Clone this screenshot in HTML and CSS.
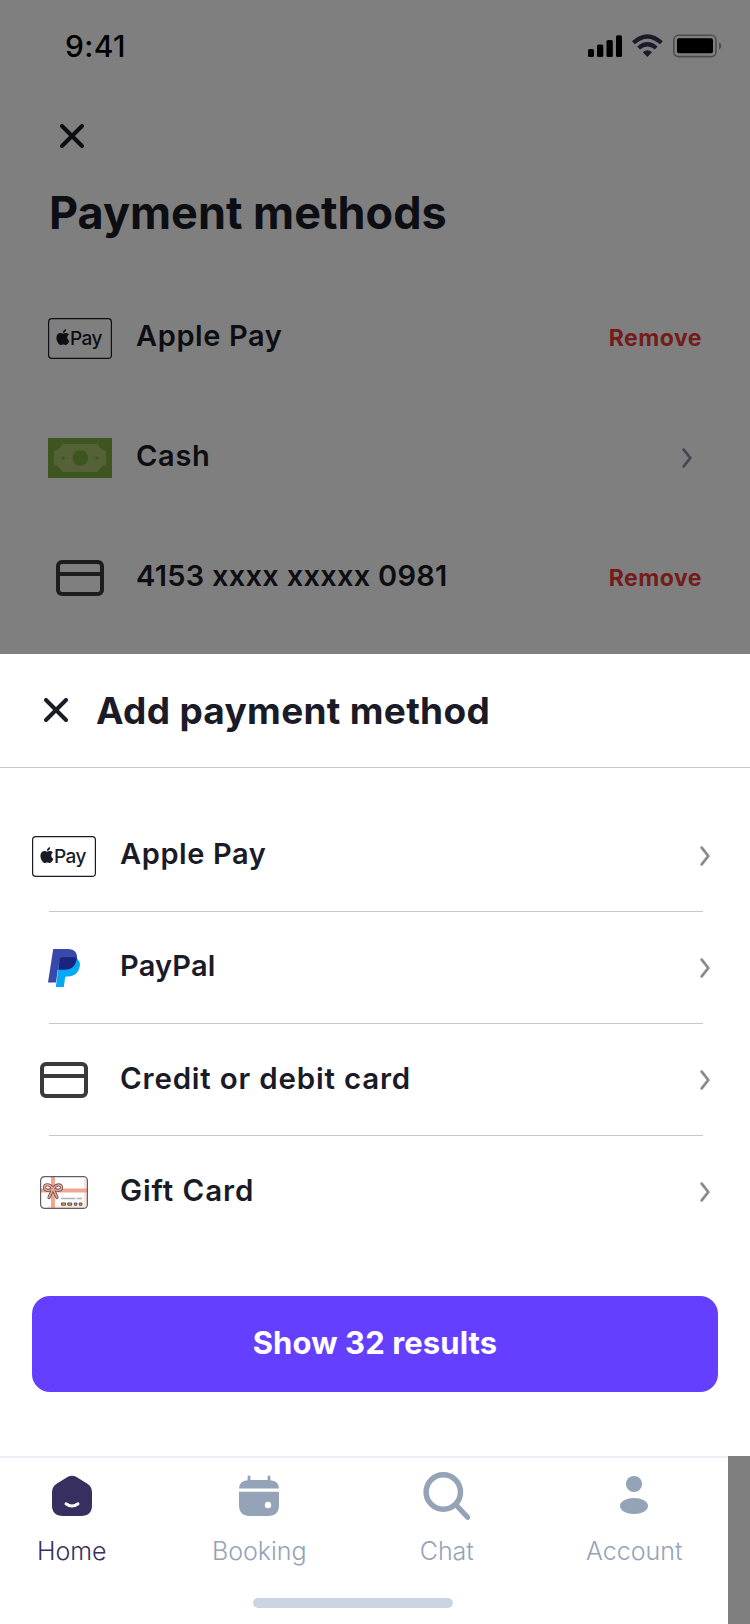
FILE: index.html
```html
<!DOCTYPE html>
<html lang="en">
<head>
<meta charset="utf-8">
<title>Payment methods</title>
<link rel="stylesheet" href="styles.css">
</head>
<body>
<svg class="defs" aria-hidden="true">
  <symbol id="close" viewBox="0 0 24 24"><path d="M2 2L22 22M22 2L2 22" fill="none" stroke="#1b1b28" stroke-width="4" stroke-linecap="round"/></symbol>
  <symbol id="chevron" viewBox="0 0 10 20"><path d="M1.7 1.7L8.3 10L1.7 18.3" fill="none" stroke="currentColor" stroke-width="2.8" stroke-linecap="round" stroke-linejoin="round"/></symbol>
  <symbol id="applepay" viewBox="0 0 64 41">
    <rect x=".6" y=".6" width="62.8" height="39.8" rx="3.2" fill="none" stroke="#1b1b28" stroke-width="1.2"/>
    <path transform="translate(7 11.2) scale(.66)" fill="#1b1b28" d="M12.152 6.896c-.948 0-2.415-1.078-3.96-1.04-2.04.027-3.91 1.183-4.961 3.014-2.117 3.675-.546 9.103 1.519 12.09 1.013 1.454 2.208 3.09 3.792 3.039 1.52-.065 2.09-.987 3.935-.987 1.831 0 2.35.987 3.96.948 1.637-.026 2.676-1.48 3.676-2.948 1.156-1.688 1.636-3.325 1.662-3.415-.039-.013-3.182-1.221-3.22-4.857-.026-3.04 2.48-4.494 2.597-4.559-1.429-2.09-3.623-2.324-4.39-2.376-2-.156-3.675 1.09-4.61 1.09zM15.53 3.83c.843-1.012 1.4-2.427 1.245-3.83-1.207.052-2.662.805-3.532 1.818-.78.896-1.454 2.338-1.273 3.714 1.338.104 2.715-.688 3.559-1.701"/>
    <text class="applepay-word" x="22" y="26.6">Pay</text>
  </symbol>
  <symbol id="card" viewBox="0 0 48 36"><rect x="2" y="2" width="44" height="32" rx="4" fill="none" stroke="#3a3a3a" stroke-width="4"/><path d="M3 14H45" stroke="#3a3a3a" stroke-width="4"/></symbol>
</svg>

<div class="phone">
  <main class="screen">
    <div class="status">
      <span class="time">9:41</span>
      <svg class="status-icons" viewBox="0 0 134 24">
        <rect x="0" y="15" width="6" height="8" rx="1.6"/><rect x="9" y="10.5" width="6.3" height="12.5" rx="1.6"/><rect x="18.5" y="6" width="6.3" height="17" rx="1.6"/><rect x="28" y="1.3" width="6" height="21.7" rx="1.6"/>
        <g fill="none" stroke="#3a3558" stroke-width="4.2"><path d="M45.4 8.8Q59.4-3.8 73.4 8.8"/><path d="M50.6 14Q59.4 6.4 68.2 14"/></g>
        <path d="M54.8 18.3Q59.4 14.3 64 18.3L59.4 23z" fill="#3a3558"/>
        <rect x="85.8" y="1.2" width="42.2" height="21.4" rx="4.6" fill="none" stroke="#000" stroke-opacity=".4" stroke-width="1.6"/>
        <rect x="89" y="4.3" width="36" height="15" rx="2"/>
        <path d="M131 8.6Q133.4 9.6 133.4 12T131 15.6z" fill-opacity=".4"/>
      </svg>
    </div>
    <svg class="close screen-close"><use href="#close"/></svg>
    <h1 class="title">Payment methods</h1>
    <ul class="saved">
      <li class="saved-row"><span class="slot"><svg class="ic-apple"><use href="#applepay"/></svg></span><span class="name n-apple">Apple Pay</span><span class="remove">Remove</span></li>
      <li class="saved-row"><span class="slot">
        <svg class="ic-cash" viewBox="0 0 64 40"><path fill="#7aaa3e" d="M0 0H64V40H0z"/><path fill="#abc470" d="M14 6H50Q52 11.5 58 13V27Q52 28.5 50 34H14Q12 28.5 6 27V13Q12 11.5 14 6z"/><circle cx="32.3" cy="20" r="7.8" fill="#7aaa3e"/><circle cx="15.5" cy="20" r="1.6" fill="#7aaa3e"/><circle cx="49" cy="20" r="1.6" fill="#7aaa3e"/></svg>
        </span><span class="name n-cash">Cash</span><svg class="chevron saved-chevron"><use href="#chevron"/></svg></li>
      <li class="saved-row"><span class="slot"><svg class="ic-card"><use href="#card"/></svg></span><span class="name n-number">4153 xxxx xxxxx 0981</span><span class="remove">Remove</span></li>
    </ul>
  </main>
  <div class="scrim"></div>

  <section class="sheet">
    <header class="sheet-head">
      <svg class="close"><use href="#close"/></svg>
      <h2 class="sheet-title">Add payment method</h2>
    </header>
    <ul class="options">
      <li class="option"><span class="slot"><svg class="ic-apple"><use href="#applepay"/></svg></span><span class="name n-apple">Apple Pay</span><svg class="chevron"><use href="#chevron"/></svg></li>
      <li class="option"><span class="slot">
        <svg class="ic-paypal" viewBox="0 0 32 38"><path fill="#03a9f4" d="M28 9C31.2 11 32.5 14 31.7 17.5C30.5 24 26 27.5 20 27.5H18.3Q17.3 27.5 17.1 28.6L15.800 38H7.8L11 15z"/><path fill="#3949ab" d="M5.2 0H20C26.5 0 29.8 4 29 10L12.5 9L9.8 21L8 33.5H0z"/><path fill="#1a237e" d="M13.2 8.3H26.2Q27.7 8.5 28.8 9.3C28 16.5 24 20.8 16.5 20.8H10.2L11.8 9.800Q12.1 8.3 13.2 8.3z"/></svg>
        </span><span class="name n-paypal">PayPal</span><svg class="chevron"><use href="#chevron"/></svg></li>
      <li class="option"><span class="slot"><svg class="ic-card"><use href="#card"/></svg></span><span class="name n-credit">Credit or debit card</span><svg class="chevron"><use href="#chevron"/></svg></li>
      <li class="option"><span class="slot">
        <svg class="ic-gift" viewBox="0 0 48 33"><path fill="#fbe3dc" d="M44 3h3v26q-1 3-4 3H8v-2h34q2 0 2-3z"/><path fill="#efa794" d="M11 1h4v31h-4zM1 12.5h46v4H1z"/><rect x=".6" y=".6" width="46.8" height="31.8" rx="4" fill="none" stroke="#5d5f65" stroke-width="1.2"/><path d="M12.5 12C9.5 7.5 4.5 8 4.5 11.5S9.5 15.5 13.5 12C16.5 8 21.5 8 21.5 11.5S16.5 15.5 12.5 12M12.5 14L9 21.5M13.5 14L17 21.5" fill="none" stroke="#6a5858" stroke-width="3.2" stroke-linecap="round"/><path d="M12.5 12C9.5 7.5 4.5 8 4.5 11.5S9.5 15.5 13.5 12C16.5 8 21.5 8 21.5 11.5S16.5 15.5 12.5 12M12.5 14L9 21.5M13.5 14L17 21.5" fill="none" stroke="#efa794" stroke-width="1.5" stroke-linecap="round"/><path d="M21 22.5H35.5M37 22.5H42" stroke="#aeb0b5" stroke-width="1.6"/><g fill="#e8bc57" stroke="#4b4b50"><path d="M21.5 27h4v2.2h-4zM27.7 27h4v2.2h-4zM34.3 27h2.6v2.2h-2.6zM39.3 27h2.6v2.2h-2.6z"/></g></svg>
        </span><span class="name n-gift">Gift Card</span><svg class="chevron"><use href="#chevron"/></svg></li>
    </ul>
    <div class="action"><button class="cta">Show 32 results</button></div>
    <div class="nav-clip">
      <nav class="nav">
        <div class="tabs">
          <a class="tab active"><svg class="tab-icon" viewBox="0 0 48 48"><path fill="currentColor" d="M19.5 5Q24 2.6 28.5 5L39 11.5Q44 14.7 44 20V33Q44 44 33 44H15Q4 44 4 33V20Q4 14.7 9 11.5z"/><path d="M18 31.8Q24 36.2 30 31.8" fill="none" stroke="#fff" stroke-width="3" stroke-linecap="round"/></svg>Home</a>
          <a class="tab"><svg class="tab-icon" viewBox="0 0 48 48"><path fill="currentColor" d="M12.6 8V4.8a1.4 1.4 0 0 1 2.8 0V8H32.6V4.8a1.4 1.4 0 0 1 2.8 0V8.2Q44 9 44 16.5H4Q4 9 12.6 8.2zM4 19.8H44V33Q44 44 33 44H15Q4 44 4 33z"/><circle cx="33" cy="33" r="3.2" fill="#fff"/></svg>Booking</a>
          <a class="tab"><svg class="tab-icon" viewBox="0 0 48 48"><g fill="none" stroke="currentColor"><circle cx="20.3" cy="20" r="17.2" stroke-width="5.5"/><path d="M34 34L44.6 45.3" stroke-width="5.2" stroke-linecap="round"/></g></svg>Chat</a>
          <a class="tab"><svg class="tab-icon" viewBox="0 0 48 48"><g fill="currentColor"><circle cx="24" cy="12" r="8.1"/><ellipse cx="24" cy="34" rx="14" ry="8"/></g></svg>Account</a>
        </div>
        <div class="home-indicator"></div>
      </nav>
    </div>
  </section>
</div>
</body>
</html>
```
FILE: styles.css
```css
* { box-sizing: border-box; }
body { margin: 0; background: #808080; font-family: Inter, "Liberation Sans", sans-serif; color: #1b1b28; }
ul { list-style: none; margin: 0; padding: 0; }
h1, h2 { margin: 0; }
svg { display: block; flex: none; }
.defs { position: absolute; width: 0; height: 0; }

.phone { position: relative; width: 750px; height: 1624px; overflow: hidden; }
.screen { height: 100%; background: #fff; }
.scrim { position: absolute; inset: 0; background: rgba(0, 0, 0, .5); }

.status { display: flex; justify-content: space-between; align-items: center; height: 91px; padding: 0 28px 0 65px; }
.time { font-size: 30px; font-weight: 500; letter-spacing: .4px; line-height: 36px; color: #000; }
.status-icons { width: 134px; height: 24px; }
.close { width: 24px; height: 24px; }
.screen-close { margin: 33px 0 0 60px; }
.title { margin-top: 37px; padding-left: 49px; font-size: 45px; font-weight: 700; line-height: 56px; }

.saved { padding: 37px 48px 0; }
.saved-row { display: flex; align-items: center; height: 120px; }
.slot { display: flex; flex: none; align-items: center; justify-content: center; width: 64px; }
.ic-apple { width: 64px; height: 41px; }
.ic-cash { width: 64px; height: 40px; }
.ic-card { width: 48px; height: 36px; }
.ic-paypal { width: 32px; height: 38px; }
.ic-gift { width: 48px; height: 33px; }
.applepay-word { font: 500 19px Inter, sans-serif; letter-spacing: -.5px; fill: #1b1b28; }
.name { flex: 1; padding: 0 0 5px 24px; font-size: 29px; font-weight: 600; line-height: 36px; white-space: nowrap; }
.n-apple { letter-spacing: .6px; }
.n-cash { letter-spacing: .7px; }
.n-number { letter-spacing: .27px; }
.n-paypal { letter-spacing: .2px; }
.n-credit { font-size: 29.5px; letter-spacing: .8px; }
.n-gift { font-size: 29.5px; letter-spacing: .9px; }
.remove { font-size: 23px; font-weight: 700; letter-spacing: .5px; line-height: 28px; color: #e93838; }
.chevron { width: 10px; height: 20px; color: #8b8b8b; }
.saved-chevron { margin-right: 10px; color: #8f8fa8; }

.sheet { position: absolute; left: 0; top: 654px; width: 750px; height: 970px; display: flex; flex-direction: column; }
.sheet-head { display: flex; flex: none; align-items: center; gap: 12px; height: 114px; padding: 0 44px 1px; background: #fff; border-bottom: 1px solid #c6c5d3; }
.sheet-title { padding: 2px 0 0 16px; font-size: 37px; font-weight: 700; letter-spacing: .3px; line-height: 44px; }
.options { flex: none; background: #fff; padding: 32px 40px 48px 32px; }
.option { position: relative; display: flex; align-items: center; height: 112px; }
.option:not(:last-child)::after { content: ""; position: absolute; left: 17px; right: 7px; bottom: 0; height: 1px; background: #c6c5d3; }

.action { flex: none; padding: 0 32px 64px; background: #fff; }
.cta { display: flex; align-items: center; justify-content: center; width: 100%; height: 96px; padding: 0 0 2px; border: 0; border-radius: 18px; background: #643fff; color: #fff; font: 700 31px/40px Inter, "Liberation Sans", sans-serif; letter-spacing: .1px; }

.nav-clip { flex: none; width: 728px; height: 168px; overflow: hidden; background: #fff; border-top: 2px solid #e9eff4; }
.nav { width: 750px; margin-left: -22px; }
.tabs { display: grid; grid-template-columns: repeat(4, 1fr); padding-top: 14px; }
.tab { display: flex; flex-direction: column; align-items: center; color: #94a3b8; font-size: 25px; font-weight: 300; line-height: 30px; }
.tab.active { color: #362f5f; }
.tab-icon { width: 48px; height: 48px; margin-bottom: 16px; }
.home-indicator { width: 200px; height: 10px; margin: 32px auto 0; border-radius: 5px; background: #cbd5e1; }
```
